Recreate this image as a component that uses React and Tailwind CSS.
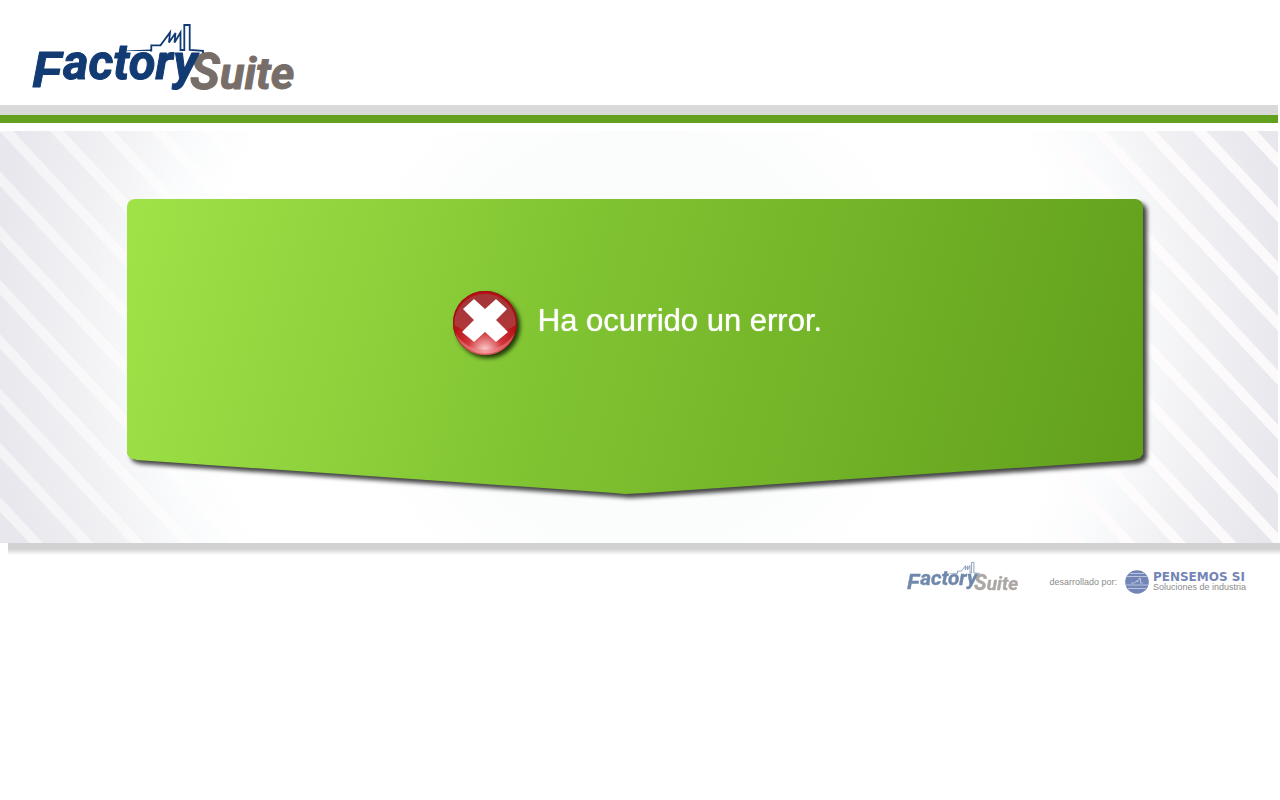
import { useId } from "react";

function FactoryLogo({ className }) {
  return (
    <svg viewBox="0 0 264 66" className={className} role="img" aria-label="FactorySuite">
      <g fontFamily="Roboto, 'Liberation Sans', sans-serif" fontWeight="700" fontStyle="italic" strokeLinejoin="round">
        <g fill="#776e69" stroke="#776e69" strokeWidth="1">
          <text x="158" y="65" fontSize="50">S</text>
          <text x="188" y="65" fontSize="45">uite</text>
        </g>
        <g fill="#123a73" stroke="#123a73" strokeWidth="1">
          <text x="0" y="63" fontSize="50" fontFamily="'Liberation Sans', Arial, sans-serif">F</text>
          <text x="31" y="55" fontSize="49">actory</text>
        </g>
      </g>
      {/* Factory skyline */}
      <path d="M95 26.5 L119 25.6 V27 H95Z" fill="#123a73" />
      <path
        d="M118 26.5 H119.3 V21.3 H128.5 L138 8.5 L137 18.5 L143.5 9 L142.5 18.5 L148.5 8.5 V26 H152.3 V1 H157.7 V26 L171 26.8 V29"
        fill="none"
        stroke="#123a73"
        strokeWidth="1.8"
      />
    </svg>
  );
}

function ErrorIcon({ className }) {
  const id = useId();
  return (
    <svg viewBox="0 0 72 72" className={className} aria-hidden="true">
      <defs>
        <linearGradient id={`${id}-top`} x1="0" y1="0" x2="0" y2="1">
          <stop offset="0" stopColor="#a23637" />
          <stop offset="1" stopColor="#b3383a" />
        </linearGradient>
        <radialGradient id={`${id}-base`} cx="0.5" cy="0.93" r="0.55">
          <stop offset="0" stopColor="#fbd5d5" />
          <stop offset="0.5" stopColor="#d2373b" />
          <stop offset="1" stopColor="#b81418" />
        </radialGradient>
      </defs>
      <circle cx="33" cy="36" r="32" fill={`url(#${id}-base)`} />
      <path d="M2 38 A31 31 0 0 1 64 38 Q52 46 33 46 Q14 46 2 38Z" fill={`url(#${id}-top)`} />
      <circle cx="33" cy="36" r="31.4" fill="none" stroke="#a00f13" strokeWidth="1.2" />
      <path d="M3 45 A31 31 0 0 0 63 45 A32 27 0 0 1 3 45Z" fill="#ee8184" opacity="0.6" />
      <path
        d="M22 13 L33 23 L44 13 L54 22 L43 33 L55 45 L44 54 L33 44 L22 54 L11 45 L23 33 L12 22Z"
        fill="#fff"
        stroke="#fff"
        strokeWidth="1.5"
        strokeLinejoin="round"
      />
    </svg>
  );
}

function Globe({ className }) {
  return (
    <svg viewBox="0 0 24 24" className={className} aria-hidden="true">
      <circle cx="12" cy="12" r="11.8" fill="#7384b6" />
      <g fill="none" stroke="#cdd4e6" strokeWidth="0.8">
        <path d="M5 3.5 H19 M2 6.5 H22 M1 15 H23 M3 18.5 H21" />
        <path d="M6 13 H9.5 L12 10.5 V12 L14 9.5 V8.5 H15.5 V13 H18" />
      </g>
    </svg>
  );
}

export default function App() {
  return (
    <div className="min-h-screen bg-white font-['Liberation_Sans',Arial,sans-serif]">
      <header className="mr-0.5">
        <div className="px-8 pt-6 pb-[15px]">
          <FactoryLogo className="block h-[66px] w-[264px] overflow-visible" />
        </div>
        <div className="h-2.5 bg-[#d9d9d9]" />
        <div className="h-2 bg-[#62a01e]" />
      </header>

      <main className="mt-2">
        <section className="relative mr-0.5 bg-[radial-gradient(circle,#fafcfc_0,#fbfcfc_200px,#ffffff_300px,#ffffff_430px,#fafbfc_490px,#f1f1f4_560px,#e8e7ed_650px)] pt-[68px] pb-[49px]">
          {/* Striped sides */}
          <div className="absolute inset-y-0 left-0 w-60 bg-[repeating-linear-gradient(47deg,transparent_0_21px,#ffffff80_22px_31px,transparent_32px_37px)]" />
          <div className="absolute inset-y-0 right-0 w-[220px] bg-[repeating-linear-gradient(47deg,transparent_0_9px,#fffcfdd9_10px_19px,transparent_20px_37px)]" />

          <div className="relative mr-[135px] ml-[127px] drop-shadow-[4px_4px_2px_#444444]">
            <div className="flex min-h-[295px] items-center justify-center gap-3.5 rounded-t-lg bg-[linear-gradient(105deg,#9fe348,#7fc231_45%,#619f1b)] pb-12 pl-1 [clip-path:polygon(0_0,100%_0,100%_calc(100%-40px),calc(100%-3px)_calc(100%-36px),calc(100%-10px)_calc(100%-34px),51%_calc(100%-1px),49%_100%,48%_calc(100%-1px),10px_calc(100%-34px),3px_calc(100%-36px),0_calc(100%-40px))]">
              <ErrorIcon className="size-[72px] shrink-0 drop-shadow-[3px_3px_2px_#1f3a08]" />
              <h1 className="pb-1 text-[31px] leading-10 text-white text-shadow-[0_0_1px_#ffffff]">Ha ocurrido un error.</h1>
            </div>
          </div>
        </section>
        <div className="ml-2 h-3 bg-linear-to-b from-[#d2d2d2] from-50% to-white" />
      </main>

      <footer className="flex items-start justify-end pt-[7px] pr-[34px]">
        <FactoryLogo className="h-7 w-28 overflow-visible opacity-60" />
        <p className="ml-[30px] pt-3 text-[9px] leading-4 text-[#8c8c8c]">desarrollado por:</p>
        <div className="ml-2 flex items-center gap-1 pt-2">
          <Globe className="size-6" />
          <div>
            <p className="font-['DejaVu_Sans',sans-serif] text-[12px] leading-[10px] font-bold text-[#7384b6]">PENSEMOS SI</p>
            <p className="text-[9px] leading-[10px] text-[#8c8c8c]">Soluciones de industria</p>
          </div>
        </div>
      </footer>
    </div>
  );
}
